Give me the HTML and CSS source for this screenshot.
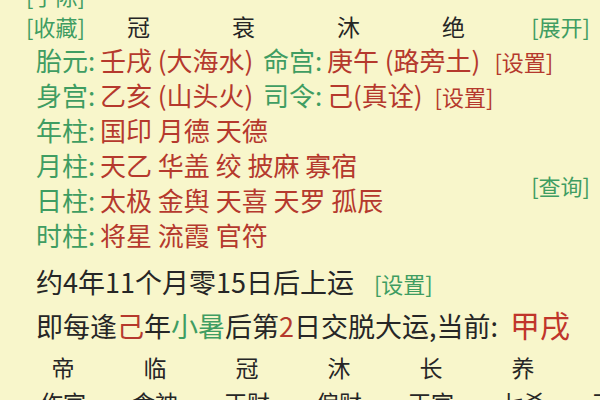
FILE: index.html
```html
<!DOCTYPE html>
<html>
<head>
    <title>排盘</title>
    <link rel="stylesheet" href="styles.css">
</head>

<body>
    <div class="page">
        <div class="tag-line"><span class="link-green">[手陈]</span></div>

        <!-- 十二长生 header -->
        <div class="head-row">
            <span class="link-green">[收藏]</span>
            <span class="head-cell">冠</span>
            <span class="head-cell">衰</span>
            <span class="head-cell">沐</span>
            <span class="head-cell">绝</span>
            <span class="link-green expand">[展开]</span>
        </div>

        <div class="info-row">
            <span class="label">胎元:</span>
            <span class="value">壬戌 (大海水)</span>
            <span class="label">命宫:</span>
            <span class="value">庚午 (路旁土)<span class="link-red wide">[设置]</span></span>
        </div>
        <div class="info-row">
            <span class="label">身宫:</span>
            <span class="value">乙亥 (山头火)</span>
            <span class="label">司令:</span>
            <span class="value">己(真诠)<span class="link-red">[设置]</span></span>
        </div>

        <!-- 神煞 -->
        <div class="shensha">
            <div class="shensha-list">
                <div class="shensha-row"><span class="label">年柱:</span><span class="value">国印 月德 天德</span></div>
                <div class="shensha-row"><span class="label">月柱:</span><span class="value">天乙 华盖 绞 披麻 寡宿</span></div>
                <div class="shensha-row"><span class="label">日柱:</span><span class="value">太极 金舆 天喜 天罗 孤辰</span></div>
                <div class="shensha-row"><span class="label">时柱:</span><span class="value">将星 流霞 官符</span></div>
            </div>
            <span class="link-green query">[查询]</span>
        </div>

        <div class="yun-line first">约4年11个月零15日后上运<span class="link-green set">[设置]</span></div>
        <div class="yun-line">即每逢<span class="red">己</span>年<span class="green">小暑</span>后第<span class="red">2</span>日交脱大运,当前: <span class="current">甲戌</span></div>

        <!-- 大运 -->
        <div class="dayun-row">
            <span>帝</span><span>临</span><span>冠</span><span>沐</span><span>长</span><span>养</span><span></span>
        </div>
        <div class="dayun-row gods">
            <span>作官</span><span>食神</span><span>正财</span><span>偏财</span><span>正官</span><span>七杀</span><span>正印</span>
        </div>
    </div>
</body>
</html>
```

FILE: styles.css
```css
body {
    margin: 0;
    background-color: #f8f6cb;
    font-family: "Noto Sans CJK SC", sans-serif;
    color: #262626;
    overflow: hidden;
}

.page {
    width: 600px;
    height: 400px;
    overflow: hidden;
}

.link-green {
    color: #3f9d62;
    font-size: 22px;
}

.link-red {
    color: #b5392d;
    font-size: 22px;
    margin-left: 12px;
}

.link-red.wide {
    margin-left: 14px;
}

.red {
    color: #b5392d;
}

.green {
    color: #3f9d62;
}

.tag-line {
    margin-top: -20px;
    padding-left: 26px;
    height: 31px;
    line-height: 31px;
}

.head-row {
    display: grid;
    grid-template-columns: 60px 105px 105px 105px 105px 1fr;
    padding-left: 26px;
    height: 31px;
    line-height: 31px;
    align-items: center;
}

.head-cell {
    text-align: center;
    font-size: 23px;
}

.expand {
    justify-self: end;
    margin-right: 10px;
}

.info-row {
    display: grid;
    grid-template-columns: 64px 163px 64px 1fr;
    padding-left: 36px;
    height: 35px;
    line-height: 35px;
    font-size: 26px;
    white-space: nowrap;
}

.label {
    color: #3f9d62;
}

.value {
    color: #b5392d;
}

.shensha {
    display: flex;
    align-items: center;
    padding-left: 36px;
    padding-right: 10px;
}

.shensha-list {
    flex: 1;
}

.shensha-row {
    display: flex;
    height: 35px;
    line-height: 35px;
    font-size: 26px;
}

.shensha-row .label {
    width: 64px;
}

.query {
    margin-top: 6px;
}

.yun-line {
    padding-left: 36px;
    height: 43px;
    line-height: 43px;
    font-size: 27px;
    white-space: nowrap;
}

.yun-line.first {
    margin-top: 8px;
}

.set {
    margin-left: 20px;
}

.current {
    color: #c0352b;
    font-size: 30px;
    margin-left: 6px;
}

.dayun-row {
    display: grid;
    grid-template-columns: repeat(7, 92px);
    padding-left: 17px;
    height: 43px;
    line-height: 43px;
    font-size: 23px;
    white-space: nowrap;
}

.dayun-row span {
    text-align: center;
}

.dayun-row.gods {
    height: 26px;
    line-height: 26px;
}
```
